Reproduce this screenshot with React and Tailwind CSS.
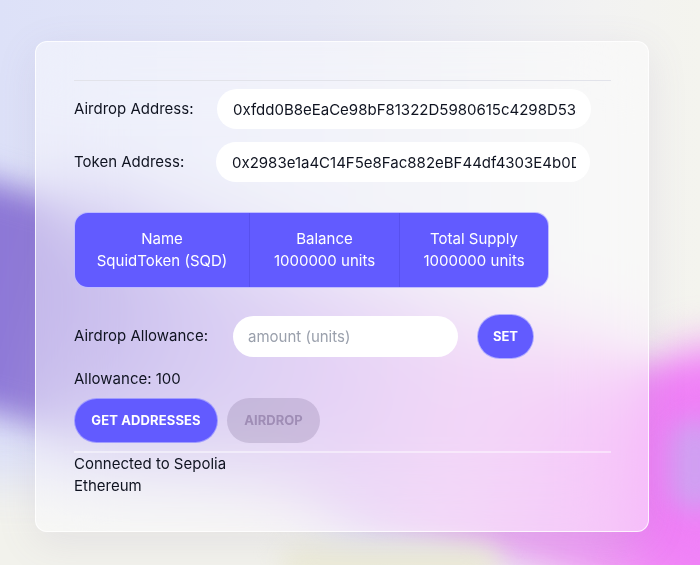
import React from "react";

export default function App() {
  return (
    <div className="relative w-[700px] h-[565px] overflow-hidden bg-[#eceef9] font-['Inter',sans-serif] text-[15px] text-[#0f1320]">
      {/* background blobs */}
      <div className="absolute inset-0 bg-[linear-gradient(90deg,#dde1f8_0%,#e6e8f6_45%,#f2f2f2_85%,#f4f4ee_100%)]" />
      <div className="absolute left-[-220px] top-[304px] w-[1250px] h-[222px] rotate-[16deg] rounded-full bg-[linear-gradient(90deg,#8a74d4_0%,#8f7ad8_18%,#bba8ea_34%,#e9b8f2_55%,#f28af7_76%,#e880f4_100%)] blur-[16px]" />
      <div className="absolute left-[625px] top-[345px] w-[180px] h-[240px] rounded-full bg-[#ef80f6] blur-[22px]" />
      <div className="absolute left-[670px] top-[420px] w-[50px] h-[90px] rounded-full bg-[#c9a8f1] blur-[12px] opacity-80" />
      <div className="absolute left-[-120px] top-[480px] w-[460px] h-[180px] rounded-full bg-[#f2f2ec] blur-[24px]" />
      <div className="absolute left-[280px] top-[545px] w-[220px] h-[40px] rounded-full bg-[#ecebd8] blur-[12px]" />

      {/* card */}
      <div className="absolute left-[35px] top-[41px] w-[614px] h-[491px] rounded-[12px] border border-white/80 bg-white/45 backdrop-blur-2xl shadow-[0_10px_40px_rgba(120,110,160,0.12)]">
        <div className="px-[38px] pt-[38px] flex flex-col">
          <div className="h-px w-[537px] bg-[#e2e3ea]" />

          <div className="mt-[8px] flex flex-col gap-[13px]">
            <div className="flex items-center">
              <span className="w-[143px] shrink-0">Airdrop Address:</span>
              <input
                readOnly
                value="0xfdd0B8eEaCe98bF81322D5980615c4298D53a1c5"
                className="w-[374px] h-[40px] rounded-full bg-white pl-[16px] pr-[14px] outline-none text-[15px] text-[#0f1320] font-['Inter',sans-serif]"
              />
            </div>
            <div className="flex items-center">
              <span className="w-[142px] shrink-0">Token Address:</span>
              <input
                readOnly
                value="0x2983e1a4C14F5e8Fac882eBF44df4303E4b0D2d8"
                className="w-[374px] h-[40px] rounded-full bg-white pl-[16px] pr-[14px] outline-none text-[15px] text-[#0f1320] font-['Inter',sans-serif]"
              />
            </div>
          </div>

          <div className="mt-[30px] self-start flex rounded-[14px] bg-[#625bff] border border-white/60 text-white text-[15px] leading-[22px] overflow-hidden">
            <div className="w-[175px] py-[15px] flex flex-col items-center border-r border-[#5750ee]">
              <span>Name</span>
              <span>SquidToken (SQD)</span>
            </div>
            <div className="w-[150px] py-[15px] flex flex-col items-center border-r border-[#5750ee]">
              <span>Balance</span>
              <span>1000000 units</span>
            </div>
            <div className="w-[148px] py-[15px] flex flex-col items-center">
              <span>Total Supply</span>
              <span>1000000 units</span>
            </div>
          </div>

          <div className="mt-[26px] flex items-center">
            <span className="w-[159px] shrink-0">Airdrop Allowance:</span>
            <input
              readOnly
              placeholder="amount (units)"
              className="w-[225px] h-[41px] rounded-full bg-white pl-[15px] outline-none text-[15px] placeholder:text-[#9aa0ac] font-['Inter',sans-serif]"
            />
            <button className="ml-[19px] w-[57px] h-[45px] rounded-full bg-[#625bff] border border-white/50 text-white text-[13px] font-bold">
              SET
            </button>
          </div>

          <div className="mt-[9px] leading-[22px]">Allowance: 100</div>

          <div className="mt-[8px] flex gap-[9px]">
            <button className="w-[144px] h-[45px] rounded-full bg-[#625bff] border border-white/40 text-white text-[13px] font-bold tracking-[0.01em]">
              GET ADDRESSES
            </button>
            <button className="w-[93px] h-[45px] rounded-full bg-[#7d6a95]/25 text-[#9f8db5] text-[13px] font-bold">
              AIRDROP
            </button>
          </div>

          <div className="mt-[8px] h-[2px] w-[537px] bg-white/45" />

          <div className="w-[170px] leading-[22px]">Connected to Sepolia Ethereum</div>
        </div>
      </div>
    </div>
  );
}
